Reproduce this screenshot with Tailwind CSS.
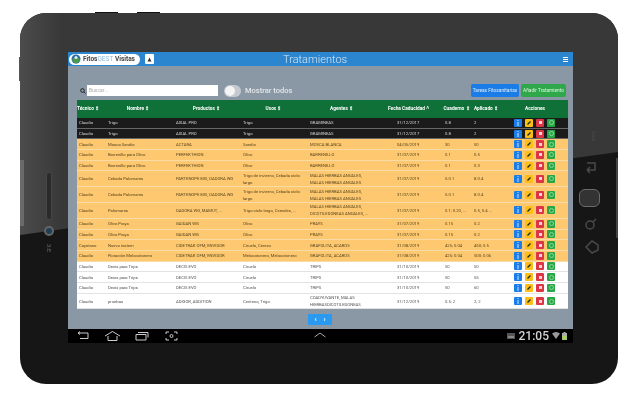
<!DOCTYPE html>
<html lang="en">
<head>
    <meta charset="UTF-8">
    <title>Tratamientos</title>
    <script src="https://cdn.jsdelivr.net/npm/@tailwindcss/browser@4"></script>
</head>
<body class="bg-white w-[640px] h-[400px] overflow-hidden [font-family:Roboto,sans-serif]">
    <div class="relative ml-[20px] mt-[13px] w-[598px] h-[371px] rounded-[26px] bg-[#161616] blur-[0.5px]">
        <!-- top buttons and side edges -->
        <div class="absolute left-[75px] -top-[1px] w-[23px] h-[2px] bg-[#111]"></div>
        <div class="absolute left-[117px] -top-[1px] w-[23px] h-[2px] bg-[#111]"></div>
        <div class="absolute -left-[1px] top-[44px] w-[2px] h-[24px] bg-[#555]"></div>
        <!-- glossy upper part -->
        <div class="absolute inset-0 rounded-[26px] bg-linear-to-r from-[#4c4c4c] to-[#383838] to-[7%] [clip-path:polygon(0_0,100%_0,100%_139px,0_222px)]"></div>
        <div class="absolute left-0 top-[147px] w-[4px] h-[66px] bg-[#6a6a6a]"></div>
        <div class="absolute right-0 top-[145px] w-[2px] h-[80px] bg-[#444]"></div>

        <!-- left bezel: speaker, camera, logo -->
        <div class="absolute left-[26px] top-[159px] w-[6px] h-[48px] rounded-full bg-[#2a2a2a] border border-[#484848]"></div>
        <div class="absolute left-[24px] top-[213px] w-[10px] h-[10px] rounded-full bg-[#1d3f57] border-2 border-[#666]"></div>
        <div class="absolute left-[21px] top-[231px] w-[16px] h-[8px] rotate-90 text-[6px] leading-[8px] font-bold text-center text-[#555]">3:E</div>

        <!-- right bezel keys -->
        <div class="absolute left-[563px] top-[120px] w-[20px] h-[6px] -rotate-90 text-[5px] leading-[6px] text-center text-[#4a4a4a]">nexo</div>
        <svg class="absolute left-[564px] top-[146px]" width="14" height="18" viewBox="0 0 14 18" fill="none" stroke="#4a4a4a" stroke-width="1.5"><path d="M3 4h8v7H3M3 11l3-3M3 11l3 3"/></svg>
        <div class="absolute left-[559px] top-[176px] w-[21px] h-[18px] rounded-[6px] bg-[#333] border border-[#6a6a6a]"></div>
        <svg class="absolute left-[564px] top-[204px]" width="14" height="16" viewBox="0 0 14 16" fill="none" stroke="#4a4a4a" stroke-width="1.5"><circle cx="6" cy="8" r="4"/><path d="M9 5l3-3"/></svg>
        <svg class="absolute left-[565px] top-[226px]" width="14" height="16" viewBox="0 0 14 16" fill="none" stroke="#4a4a4a" stroke-width="1.5"><path d="M1 8l6-6 6 4v5l-6 3z"/></svg>

        <div class="relative pt-[39px] pl-[48px]">
            <div class="w-[505px]">
                <!-- app header -->
                <div class="relative h-[14px] bg-[#2b85cf] flex items-center pl-[1px] pr-[5px]">
                    <div class="flex items-center gap-[2px] w-[71px] h-[11px] rounded-full bg-white pl-[2px]">
                        <svg width="10" height="10" viewBox="0 0 10 10"><circle cx="5" cy="5" r="4.5" fill="#2b6ea8"/><path d="M1 6c2-3 5-3 8-1-1 3-3 4.500-4 4.500S2 8 1 6z" fill="#4d9a4a"/><circle cx="5" cy="3.500" r="1.500" fill="#e5eef5"/></svg>
                        <span class="text-[6.500px] leading-none font-bold text-[#444]">Fitos<span class="font-normal text-[#8fc1e8]">GEST</span> Visitas</span>
                    </div>
                    <div class="ml-[5px] w-[9px] h-[10px] rounded-[1px] bg-white flex items-center justify-center">
                        <svg width="5" height="5" viewBox="0 0 5 5"><path d="M2.500 0.500L4.500 4.500H0.500z" fill="#333"/></svg>
                    </div>
                    <span class="absolute left-[215px] top-[1px] text-[11px] leading-[13px] font-light text-[#d5e8f7]">Tratamientos</span>
                    <div class="ml-auto flex flex-col gap-[1px] w-[5px]">
                        <div class="h-[1px] bg-white"></div>
                        <div class="h-[1px] bg-white"></div>
                        <div class="h-[1px] bg-white"></div>
                    </div>
                </div>

                <!-- content -->
                <div class="h-[263px] bg-[#8998a4] pl-[9px] pr-[5px] pt-[18px]">
                    <div class="flex items-center h-[13px] mb-[3px]">
                        <svg class="ml-[3px]" width="6" height="6" viewBox="0 0 6 6" fill="none" stroke="#222" stroke-width="1"><circle cx="2.500" cy="2.500" r="1.800"/><path d="M4 4l1.500 1.500"/></svg>
                        <div class="ml-[1px] w-[131px] h-[11px] bg-white flex items-center pl-[2px] text-[5px] text-[#aaa]">Buscar...</div>
                        <div class="ml-[6px] w-[17px] h-[12px] rounded-full bg-[#c3c9ce] flex items-center pl-[1px]">
                            <div class="w-[10px] h-[10px] rounded-full bg-[#f4f4f4]"></div>
                        </div>
                        <span class="ml-[4px] text-[7.500px] font-medium text-[#e3e6e8]">Mostrar todos</span>
                        <div class="ml-auto mr-[2px] flex gap-[2px]">
                            <div class="w-[48px] h-[13px] rounded-[2px] bg-[#1a7ce6] flex items-center justify-center text-[4.800px] text-[#dcebfb]">Tareas Fitosanitarias</div>
                            <div class="w-[45px] h-[13px] rounded-[2px] bg-[#2ea84a] flex items-center justify-center text-[4.800px] text-[#dcf3e0]">Añadir Tratamiento</div>
                        </div>
                    </div>

                    <!-- table -->
                    <div class="w-[491px]">
                        <div class="grid grid-cols-[29px_68px_67px_67px_87px_48px_29px_40px_56px] items-center h-[18px] bg-[#0f7038] text-[4.800px] font-bold text-white text-center whitespace-nowrap">
                            <span class="pr-[12px]">Técnico ⇕</span>
                            <span class="pr-[4px]">Nombre ⇕</span>
                            <span class="pr-[2px]">Productos ⇕</span>
                            <span class="pr-[2px]">Usos ⇕</span>
                            <span class="pr-[20px]">Agentes ⇕</span>
                            <span class="-ml-[7px] text-left">Fecha Caducidad ˄</span>
                            <span class="pr-[2px]">Cuaderno ⇕</span>
                            <span class="pr-[12px]">Aplicado ⇕</span>
                            <span class="pr-[10px]">Acciones</span>
                        </div>
                        <div id="rows"></div>
                    </div>

                    <!-- pagination -->
                    <div class="ml-[231px] mt-[5px] w-[24px] h-[11px] rounded-[1px] bg-[#2a9af0] flex items-center justify-around px-[3px] text-[7px] leading-none font-bold text-white">
                        <span>‹</span><span>›</span>
                    </div>
                </div>

                <!-- android status bar -->
                <div class="relative h-[14px] bg-black flex items-center pl-[9px] pr-[6px]">
                    <svg width="13" height="10" viewBox="0 0 13 10" fill="none" stroke="#ccc" stroke-width="1"><path d="M1 2h10v5.500H3M1 2l2-1.500M1 2l2 1.500"/></svg>
                    <svg class="ml-[14px]" width="17" height="10" viewBox="0 0 17 10" fill="none" stroke="#ccc" stroke-width="1"><path d="M1 5l7.500-4.500L16 5M4 5v4.500h9V5"/></svg>
                    <svg class="ml-[14px]" width="14" height="10" viewBox="0 0 14 10" fill="none" stroke="#ccc" stroke-width="1"><path d="M1 3.500h10v5.500H1zM3 1.500h10v5"/></svg>
                    <svg class="ml-[16px]" width="13" height="10" viewBox="0 0 13 10" fill="none" stroke="#ccc" stroke-width="1"><path d="M1 3V1h3M9 1h3v2M12 7v2H9M4 9H1V7"/><circle cx="6.500" cy="5" r="1.500"/></svg>
                    <svg class="absolute left-[246px] top-[3px]" width="12" height="6" viewBox="0 0 12 6" fill="none" stroke="#aaa" stroke-width="1"><path d="M0.500 5L6 1l5.500 4"/></svg>
                    <svg class="ml-auto" width="8" height="6" viewBox="0 0 8 6"><rect width="8" height="6" fill="#555"/><rect x="1" y="3" width="6" height="2" fill="#888"/></svg>
                    <span class="ml-[4px] text-[12px] leading-none font-medium text-[#d4d4d4]">21:05</span>
                    <svg class="ml-[3px]" width="8" height="8" viewBox="0 0 8 8"><path d="M0 1.500C2.500-0.500 5.500-0.500 8 1.500L4 7z" fill="#999"/></svg>
                    <svg class="ml-[2px]" width="5" height="8" viewBox="0 0 5 8"><rect x="1.500" width="2" height="1" fill="#aaa"/><rect y="1" width="5" height="7" fill="#aaa"/><rect x="0.500" y="4" width="4" height="3.500" fill="#a5d64a"/></svg>
                </div>
            </div>
        </div>
    </div>

    <script>
        const orange = 'bg-[#fdc86f] text-[#5a4620] border-[#f8dca6]';
        const dark = 'bg-[#1b1b1b] text-[#d4d4d4] border-[#666]';
        const white = 'bg-white text-[#555] border-[#e3e3e3]';
        const single = 'h-[10.7px]';
        const tall = 'h-[15.8px]';
        const mh = 'MALAS HIERBAS ANUALES,<br>MALAS HIERBAS ANUALES';
        const cebadaUso = 'Trigo de invierno, Cebada ciclo<br>largo';
        const rows = [
            [dark, single, 'Claudio', 'Trigo', 'AXIAL PRO', 'Trigo', 'GRAMINEAS', '31/12/2017', '0.8', '2'],
            [dark, single, 'Claudio', 'Trigo', 'AXIAL PRO', 'Trigo', 'GRAMINEAS', '31/12/2017', '0.8', '2'],
            [orange, single, 'Claudio', 'Mosca Sandia', 'ACTARA', 'Sandia', 'MOSCA BLANCA', '04/05/2019', '30', '50'],
            [orange, single, 'Claudio', 'Barrenillo para Olivo', 'PERFEKTHION', 'Olivo', 'BARRENILLO', '31/07/2019', '0.1', '0.5'],
            [orange, single, 'Claudio', 'Barrenillo para Olivo', 'PERFEKTHION', 'Olivo', 'BARRENILLO', '31/07/2019', '0.1', '0.3'],
            [orange, tall, 'Claudio', 'Cebada Palomares', 'PARTENOPE 800, DADORA WG', cebadaUso, mh, '31/07/2019', '5.0.1', '8.0.4'],
            [orange, tall, 'Claudio', 'Cebada Palomares', 'PARTENOPE 800, DADORA WG', cebadaUso, mh, '31/07/2019', '5.0.1', '8.0.4'],
            [orange, tall, 'Claudio', 'Palomares', 'DADORA WG, MAMUT, ...', 'Trigo ciclo largo, Cereales, ...', 'MALAS HIERBAS ANUALES,<br>DICOTILEDONEAS ANUALES, ...', '31/07/2019', '0.1; 0.20, ...', '0.5, 0.4 ...'],
            [orange, single, 'Claudio', 'Olivo Praya', 'GAIDAN WG', 'Olivo', 'PRAYS', '31/07/2019', '0.15', '0.2'],
            [orange, single, 'Claudio', 'Olivo Praya', 'GAIDAN WG', 'Olivo', 'PRAYS', '31/07/2019', '0.15', '0.2'],
            [orange, single, 'Cayetano', 'Nuevo instem', 'CIDETRAK OFM, ENVIDOR', 'Ciruelo, Cerezo', 'GRAFOLITA, ACAROS', '31/08/2019', '425; 0.04', '450; 0.5'],
            [orange, single, 'Claudio', 'Floración Melocotonero', 'CIDETRAK OFM, ENVIDOR', 'Melocotonero, Melocotonero', 'GRAFOLITA, ACAROS', '31/08/2019', '425; 0.04', '500; 0.06'],
            [white, single, 'Claudio', 'Decis para Trips', 'DECIS EVO', 'Ciruelo', 'TRIPS', '31/10/2019', '50', '50'],
            [white, single, 'Claudio', 'Decis para Trips', 'DECIS EVO', 'Ciruelo', 'TRIPS', '31/10/2019', '50', '55'],
            [white, single, 'Claudio', 'Decis para Trips', 'DECIS EVO', 'Ciruelo', 'TRIPS', '31/10/2019', '50', '60'],
            [white, tall, 'Claudio', 'pruebas', 'ADIGOR, ADDITION', 'Centeno, Trigo', 'COADYUVANTE, MALAS<br>HIERBASDICOTILEDONEAS', '31/12/2019', '0.5; 2', '2; 2']
        ];
        const actions = `<div class="flex items-center gap-[3px] pl-[2px]">
            <div class="w-[8px] h-[8px] rounded-[1px] bg-[#1a7de8] flex items-center justify-center"><svg width="4" height="6" viewBox="0 0 4 6"><path d="M1.500 0h1v1h-1zM1.500 2h1v4h-1z" fill="#cfe3fb"/></svg></div>
            <div class="w-[8px] h-[8px] rounded-[1px] bg-[#fbbf16] flex items-center justify-center"><svg width="4" height="4" viewBox="0 0 4 4"><path d="M0.500 3.500L3.500 0.500" stroke="#222" stroke-width="1.200"/></svg></div>
            <div class="w-[8px] h-[8px] rounded-[1px] bg-[#dc3545] flex items-center justify-center"><div class="w-[3px] h-[3px] bg-[#f6d5d8]"></div></div>
            <div class="w-[8px] h-[8px] rounded-[1px] bg-[#28a745] flex items-center justify-center"><div class="w-[5px] h-[5px] rounded-full border border-[#8fd3a2]"></div></div>
        </div>`;
        document.getElementById('rows').innerHTML = rows.map(([colour, height, ...cells]) =>
            `<div class="grid grid-cols-[29px_68px_67px_67px_87px_48px_29px_40px_56px] items-center box-border border-b ${colour} ${height} text-[4.200px] leading-[7px]">`
            + cells.map(c => `<span class="pl-[2px] whitespace-nowrap">${c}</span>`).join('')
            + actions + '</div>'
        ).join('');
    </script>
</body>
</html>
